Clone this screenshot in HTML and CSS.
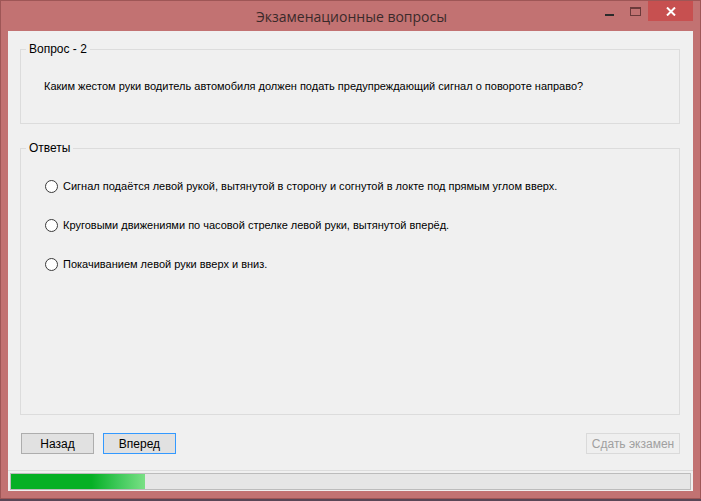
FILE: index.html
```html
<!DOCTYPE html>
<html lang="ru">
<head>
<meta charset="utf-8">
<title>Экзаменационные вопросы</title>
<link rel="stylesheet" href="styles.css">
</head>
<body>
<div class="window">
  <div class="titlebar">
    <div class="title">Экзаменационные вопросы</div>
    <div class="controls">
      <div class="ctl min"><svg width="9" height="2" viewBox="0 0 9 2"><rect width="9" height="2" fill="#2b2b2b"/></svg></div>
      <div class="ctl max"><svg width="11" height="9" viewBox="0 0 11 9"><rect x="0.5" y="0.5" width="10" height="8" fill="none" stroke="#6b3a3a"/><rect x="0.5" y="0.5" width="10" height="1.5" fill="#6b3a3a"/></svg></div>
      <div class="ctl close"><svg width="10" height="9" viewBox="0 0 10 9"><path d="M1 0.5 L9 8.5 M9 0.5 L1 8.5" stroke="#fff" stroke-width="2"/></svg></div>
    </div>
  </div>
  <div class="client">
    <div class="group question">
      <span class="legend">Вопрос - 2</span>
      <p class="qtext">Каким жестом руки водитель автомобиля должен подать предупреждающий сигнал о повороте направо?</p>
    </div>
    <div class="group answers">
      <span class="legend">Ответы</span>
      <label class="option"><span class="radio"></span>Сигнал подаётся левой рукой, вытянутой в сторону и согнутой в локте под прямым углом вверх.</label>
      <label class="option"><span class="radio"></span>Круговыми движениями по часовой стрелке левой руки, вытянутой вперёд.</label>
      <label class="option"><span class="radio"></span>Покачиванием левой руки вверх и вниз.</label>
    </div>
    <div class="buttons">
      <div class="btn">Назад</div>
      <div class="btn focus">Вперед</div>
      <span class="spacer"></span>
      <div class="btn wide disabled">Сдать экзамен</div>
    </div>
    <div class="statusbar">
      <div class="progress"><div class="fill" style="width:134px"></div></div>
    </div>
  </div>
</div>
</body>
</html>
```
FILE: styles.css
```css
html, body {
  margin: 0;
  padding: 0;
  width: 701px;
  height: 501px;
  overflow: hidden;
  background: #5a4656;
}
.window {
  width: 701px;
  height: 499px;
  box-sizing: border-box;
  border: 1px solid #9e5656;
  background: #c27272;
  padding: 0 7px 7px 7px;
  display: flex;
  flex-direction: column;
  font-family: "Liberation Sans", Arial, sans-serif;
}
.titlebar {
  height: 30px;
  position: relative;
  display: flex;
  justify-content: center;
  flex: none;
}
.title {
  font-family: "Open Sans", "Noto Sans", sans-serif;
  font-size: 14px;
  color: #3a2a2a;
  line-height: 31px;
  margin-left: 2px;
}
.controls {
  position: absolute;
  right: 0;
  top: 0;
  display: flex;
  align-items: flex-start;
}
.ctl {
  display: flex;
  justify-content: center;
}
.min { width: 26px; align-items: flex-end; height: 15px; }
.max { width: 26px; align-items: flex-end; height: 15px; }
.close { width: 45px; background: #c75050; height: 20px; align-items: center; }
.client {
  flex: 1;
  background: #f0f0f0;
  display: flex;
  flex-direction: column;
  padding: 0 13px 0 12px;
  font-size: 11px;
  color: #000;
}
.group {
  position: relative;
  border: 1px solid #dcdcdc;
  box-sizing: border-box;
}
.legend {
  position: absolute;
  top: -8px;
  left: 5px;
  padding: 0 3px 0 3px;
  background: #f0f0f0;
  line-height: 14px;
  font-size: 12px;
}
.question {
  margin-top: 18px;
  height: 75px;
  padding: 29px 0 0 23px;
}
.qtext {
  margin: 0;
  line-height: 14px;
}
.answers {
  margin-top: 24px;
  height: 267px;
  padding: 30px 0 0 24px;
  display: flex;
  flex-direction: column;
  gap: 25px;
}
.option {
  display: flex;
  align-items: center;
  line-height: 14px;
  height: 14px;
}
.radio {
  width: 11px;
  height: 11px;
  border: 1px solid #3a3a3a;
  border-radius: 50%;
  background: #fff;
  margin-right: 5px;
  flex: none;
}
.buttons {
  display: flex;
  margin-top: 18px;
  padding-left: 1px;
  gap: 9px;
  height: 21px;
}
.spacer { flex: 1; }
.btn {
  width: 73px;
  height: 21px;
  box-sizing: border-box;
  border: 1px solid #adadad;
  background: #e1e1e1;
  font-size: 12px;
  color: #000;
  display: flex;
  align-items: center;
  justify-content: center;
}
.btn.focus { border: 1px solid #3399ff; }
.btn.wide { width: 94px; }
.btn.disabled { color: #a0a0a0; background: #efefef; border: 1px solid #dadada; }
.statusbar {
  margin: 16px -13px 0 -12px;
  border-top: 1px solid #dcdcdc;
  padding: 2px 2px 1px 2px;
}
.progress {
  height: 17px;
  box-sizing: border-box;
  border: 1px solid #bcbcbc;
  background: #e6e6e6;
}
.fill {
  height: 15px;
  background: linear-gradient(to right, #06b025 0%, #06b025 60%, #3fc95a 80%, #7ae085 100%);
}
```
